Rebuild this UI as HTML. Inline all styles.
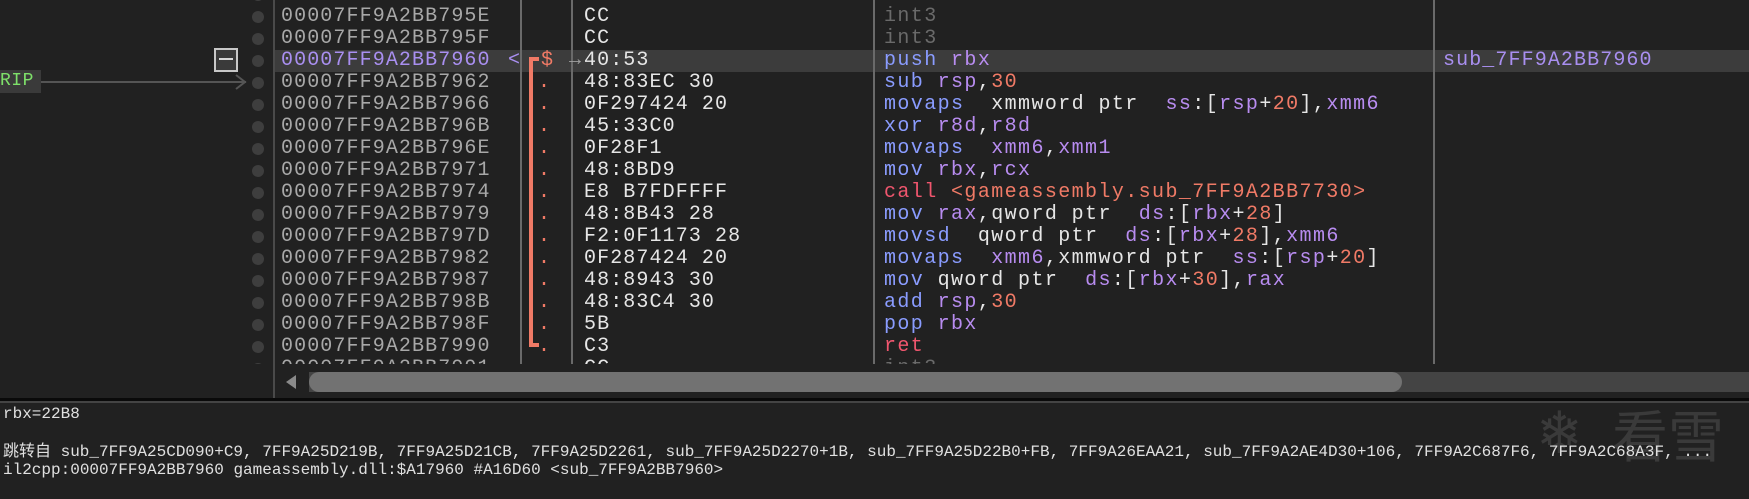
<!DOCTYPE html>
<html><head><meta charset="utf-8"><style>
body{margin:0;width:1749px;height:499px;background:#212121;overflow:hidden;position:relative;font-family:"Liberation Mono",monospace}
.a{position:absolute}
.m{font-size:20px;letter-spacing:1.1px;line-height:22px;white-space:pre}
.ad{color:#a8a8a8;left:281px}
.by{color:#e6e6e6;left:584px}
.ds{left:884px;letter-spacing:1.4px}
.mn{color:#8a9cff}.rg{color:#b88cf0}.nu{color:#f07a66}.ca{color:#f0566e}.g{color:#6a6a6a}.w{color:#e6e6e6}
.dot{position:absolute;left:252px;width:12px;height:12px;border-radius:6px;background:#3e3e3e}
.pd{color:#f07a66;left:538px}
.vl{position:absolute;width:2px;background:#6a6a6a;top:0;height:364px}
.lo{font-size:16px;line-height:18px;white-space:pre;color:#e0e0e0;font-family:"Liberation Mono","Noto Sans CJK SC",monospace}
</style></head><body>
<div class="a" style="left:273px;top:0;width:2px;height:400px;background:#4a4a4a"></div>
<div class="a" style="left:275px;top:50px;width:1474px;height:22px;background:#3c3c3c"></div>
<div class="a" style="left:0;top:0;width:1749px;height:364px;overflow:hidden">
<div class="vl" style="left:520px"></div>
<div class="vl" style="left:571px"></div>
<div class="vl" style="left:873px"></div>
<div class="vl" style="left:1433px"></div>
<div class="dot" style="top:11px"></div><div class="dot" style="top:33px"></div><div class="dot" style="top:55px"></div><div class="dot" style="top:77px"></div><div class="dot" style="top:99px"></div><div class="dot" style="top:121px"></div><div class="dot" style="top:143px"></div><div class="dot" style="top:165px"></div><div class="dot" style="top:187px"></div><div class="dot" style="top:209px"></div><div class="dot" style="top:231px"></div><div class="dot" style="top:253px"></div><div class="dot" style="top:275px"></div><div class="dot" style="top:297px"></div><div class="dot" style="top:319px"></div><div class="dot" style="top:341px"></div><div class="dot" style="top:363px"></div>
<div class="dot" style="top:-11px"></div>
<div class="a" style="left:529px;top:57px;width:4px;height:290px;background:#f07a66"></div>
<div class="a" style="left:529px;top:57px;width:10px;height:4px;background:#f07a66"></div>
<div class="a" style="left:529px;top:343px;width:10px;height:4px;background:#f07a66"></div>
<div class="a m ad" style="top:-16px">00007FF9A2BB795D</div><div class="a m by" style="top:-16px">CC</div><div class="a m ds g" style="top:-16px">int3</div>
<div class="a m ad" style="top:6px">00007FF9A2BB795E</div><div class="a m by" style="top:6px">CC</div><div class="a m ds g" style="top:6px">int3</div>
<div class="a m ad" style="top:28px">00007FF9A2BB795F</div><div class="a m by" style="top:28px">CC</div><div class="a m ds g" style="top:28px">int3</div>
<div class="a m ad" style="top:50px;color:#a98ff0">00007FF9A2BB7960</div>
<div class="a m" style="top:50px;left:508px;color:#a98ff0">&lt;</div>
<div class="a m" style="top:50px;left:541px;color:#f07a66">$</div>
<div class="a m" style="top:50px;left:569px;color:#a0a0a0">→</div>
<div class="a m by" style="top:50px">40:53</div><div class="a m ds" style="top:50px"><span class="mn">push</span> <span class="rg">rbx</span></div>
<div class="a m" style="top:50px;left:1443px;color:#a98ff0">sub_7FF9A2BB7960</div>
<div class="a m ad" style="top:72px">00007FF9A2BB7962</div><div class="a m pd" style="top:72px">.</div><div class="a m by" style="top:72px">48:83EC 30</div><div class="a m ds" style="top:72px"><span class="mn">sub</span> <span class="rg">rsp</span><span class="w">,</span><span class="nu">30</span></div>
<div class="a m ad" style="top:94px">00007FF9A2BB7966</div><div class="a m pd" style="top:94px">.</div><div class="a m by" style="top:94px">0F297424 20</div><div class="a m ds" style="top:94px"><span class="mn">movaps</span>  <span class="w">xmmword ptr</span>  <span class="rg">ss</span><span class="w">:[</span><span class="rg">rsp</span><span class="w">+</span><span class="nu">20</span><span class="w">],</span><span class="rg">xmm6</span></div>
<div class="a m ad" style="top:116px">00007FF9A2BB796B</div><div class="a m pd" style="top:116px">.</div><div class="a m by" style="top:116px">45:33C0</div><div class="a m ds" style="top:116px"><span class="mn">xor</span> <span class="rg">r8d</span><span class="w">,</span><span class="rg">r8d</span></div>
<div class="a m ad" style="top:138px">00007FF9A2BB796E</div><div class="a m pd" style="top:138px">.</div><div class="a m by" style="top:138px">0F28F1</div><div class="a m ds" style="top:138px"><span class="mn">movaps</span>  <span class="rg">xmm6</span><span class="w">,</span><span class="rg">xmm1</span></div>
<div class="a m ad" style="top:160px">00007FF9A2BB7971</div><div class="a m pd" style="top:160px">.</div><div class="a m by" style="top:160px">48:8BD9</div><div class="a m ds" style="top:160px"><span class="mn">mov</span> <span class="rg">rbx</span><span class="w">,</span><span class="rg">rcx</span></div>
<div class="a m ad" style="top:182px">00007FF9A2BB7974</div><div class="a m pd" style="top:182px">.</div><div class="a m by" style="top:182px">E8 B7FDFFFF</div><div class="a m ds" style="top:182px"><span class="ca">call</span> <span class="nu">&lt;gameassembly.sub_7FF9A2BB7730&gt;</span></div>
<div class="a m ad" style="top:204px">00007FF9A2BB7979</div><div class="a m pd" style="top:204px">.</div><div class="a m by" style="top:204px">48:8B43 28</div><div class="a m ds" style="top:204px"><span class="mn">mov</span> <span class="rg">rax</span><span class="w">,qword ptr</span>  <span class="rg">ds</span><span class="w">:[</span><span class="rg">rbx</span><span class="w">+</span><span class="nu">28</span><span class="w">]</span></div>
<div class="a m ad" style="top:226px">00007FF9A2BB797D</div><div class="a m pd" style="top:226px">.</div><div class="a m by" style="top:226px">F2:0F1173 28</div><div class="a m ds" style="top:226px"><span class="mn">movsd</span>  <span class="w">qword ptr</span>  <span class="rg">ds</span><span class="w">:[</span><span class="rg">rbx</span><span class="w">+</span><span class="nu">28</span><span class="w">],</span><span class="rg">xmm6</span></div>
<div class="a m ad" style="top:248px">00007FF9A2BB7982</div><div class="a m pd" style="top:248px">.</div><div class="a m by" style="top:248px">0F287424 20</div><div class="a m ds" style="top:248px"><span class="mn">movaps</span>  <span class="rg">xmm6</span><span class="w">,xmmword ptr</span>  <span class="rg">ss</span><span class="w">:[</span><span class="rg">rsp</span><span class="w">+</span><span class="nu">20</span><span class="w">]</span></div>
<div class="a m ad" style="top:270px">00007FF9A2BB7987</div><div class="a m pd" style="top:270px">.</div><div class="a m by" style="top:270px">48:8943 30</div><div class="a m ds" style="top:270px"><span class="mn">mov</span> <span class="w">qword ptr</span>  <span class="rg">ds</span><span class="w">:[</span><span class="rg">rbx</span><span class="w">+</span><span class="nu">30</span><span class="w">],</span><span class="rg">rax</span></div>
<div class="a m ad" style="top:292px">00007FF9A2BB798B</div><div class="a m pd" style="top:292px">.</div><div class="a m by" style="top:292px">48:83C4 30</div><div class="a m ds" style="top:292px"><span class="mn">add</span> <span class="rg">rsp</span><span class="w">,</span><span class="nu">30</span></div>
<div class="a m ad" style="top:314px">00007FF9A2BB798F</div><div class="a m pd" style="top:314px">.</div><div class="a m by" style="top:314px">5B</div><div class="a m ds" style="top:314px"><span class="mn">pop</span> <span class="rg">rbx</span></div>
<div class="a m ad" style="top:336px">00007FF9A2BB7990</div><div class="a m pd" style="top:336px">.</div><div class="a m by" style="top:336px">C3</div><div class="a m ds" style="top:336px"><span class="ca">ret</span></div>
<div class="a m ad" style="top:358px">00007FF9A2BB7991</div><div class="a m by" style="top:358px">CC</div><div class="a m ds g" style="top:358px">int3</div>
</div>
<div class="a" style="left:0;top:70px;width:41px;height:23px;background:#3a3a3a"></div>
<div class="a m" style="left:0;top:70px;color:#7ee06a;font-size:18px;letter-spacing:0.5px">RIP</div>
<div class="a" style="left:41px;top:81px;width:205px;height:2px;background:#555"></div>
<svg class="a" style="left:234px;top:74px" width="14" height="16"><path d="M2 1 L11 8 L2 15" stroke="#555" stroke-width="2" fill="none"/></svg>
<div class="a" style="left:214px;top:48px;width:20px;height:20px;border:2px solid #c8c8c8;background:#3a3a3a"></div>
<div class="a" style="left:219px;top:58px;width:14px;height:2px;background:#d8d8d8"></div>
<div class="a" style="left:275px;top:364px;width:1474px;height:34px;background:#212121"></div>
<svg class="a" style="left:284px;top:374px" width="14" height="16"><path d="M12 1 L2 8 L12 15 Z" fill="#8a8a8a"/></svg>
<div class="a" style="left:309px;top:372px;width:1440px;height:20px;background:#444"></div>
<div class="a" style="left:309px;top:372px;width:1093px;height:20px;border-radius:10px;background:#727272"></div>
<div class="a" style="left:0;top:398px;width:1749px;height:3px;background:#0a0a0a"></div>
<div class="a" style="left:0;top:401px;width:1749px;height:2px;background:#444"></div>
<div class="a lo" style="left:3px;top:405px">rbx=22B8</div>
<div class="a" style="left:1540px;top:402px;font-size:64px;line-height:70px;color:#3a3a3a">❄</div>
<div class="a" style="left:1612px;top:398px;font-family:'Noto Sans CJK SC',sans-serif;font-size:56px;line-height:72px;color:#3a3a3a">看雪</div>
<div class="a lo" style="left:3px;top:443px">跳转自 sub_7FF9A25CD090+C9, 7FF9A25D219B, 7FF9A25D21CB, 7FF9A25D2261, sub_7FF9A25D2270+1B, sub_7FF9A25D22B0+FB, 7FF9A26EAA21, sub_7FF9A2AE4D30+106, 7FF9A2C687F6, 7FF9A2C68A3F, ...</div>
<div class="a lo" style="left:3px;top:461px">il2cpp:00007FF9A2BB7960 gameassembly.dll:$A17960 #A16D60 &lt;sub_7FF9A2BB7960&gt;</div>
</body></html>
